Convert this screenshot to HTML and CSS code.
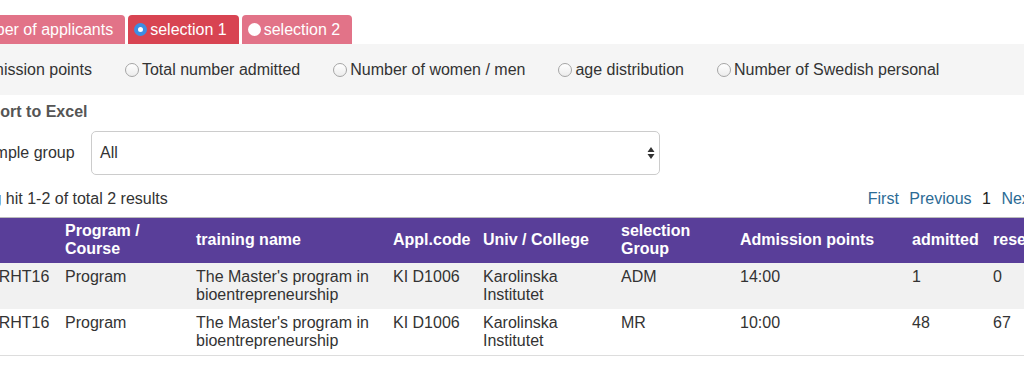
FILE: index.html
```html
<!DOCTYPE html>
<html lang="en">
<head>
  <meta charset="UTF-8">
  <title>Admission statistics</title>
  <link rel="stylesheet" href="styles.css">
</head>
<body>
  <div class="page">
    <div class="tabs">
      <div class="tab"><span class="dot"></span>Number of applicants</div>
      <div class="tab active"><span class="dot checked"></span>selection 1</div>
      <div class="tab"><span class="dot"></span>selection 2</div>
    </div>

    <div class="options">
      <label class="option"><span class="radio"></span>Admission points</label>
      <label class="option"><span class="radio"></span>Total number admitted</label>
      <label class="option"><span class="radio"></span>Number of women / men</label>
      <label class="option"><span class="radio"></span>age distribution</label>
      <label class="option"><span class="radio"></span>Number of Swedish personal</label>
    </div>

    <div class="filters">
      <div class="export">Export to Excel</div>
      <div class="field">
        <span class="field-label">Sample group</span>
        <div class="select">
          <span>All</span>
          <svg width="8" height="14" viewBox="0 0 8 14"><path d="M4 1 L7.5 6 H0.5 Z M4 13 L7.5 8 H0.5 Z" fill="#333"/></svg>
        </div>
      </div>
    </div>

    <div class="results">
      <span class="count">Showing hit 1-2 of total 2 results</span>
      <nav class="pager">
        <a>First</a>
        <a>Previous</a>
        <span class="current">1</span>
        <a>Next</a>
        <a>Last</a>
      </nav>
    </div>

    <table class="grid">
      <colgroup>
        <col class="c1"><col class="c2"><col class="c3"><col class="c4"><col class="c5">
        <col class="c6"><col class="c7"><col class="c8"><col class="c9">
      </colgroup>
      <thead>
        <tr>
          <th>Code</th>
          <th>Program / Course</th>
          <th>training name</th>
          <th>Appl.code</th>
          <th>Univ / College</th>
          <th>selection Group</th>
          <th>Admission points</th>
          <th>admitted</th>
          <th>reserves</th>
        </tr>
      </thead>
      <tbody>
        <tr>
          <td class="code">KIMEDRHT16</td>
          <td>Program</td>
          <td>The Master's program in bioentrepreneurship</td>
          <td>KI D1006</td>
          <td>Karolinska Institutet</td>
          <td>ADM</td>
          <td>14:00</td>
          <td>1</td>
          <td>0</td>
        </tr>
        <tr>
          <td class="code">KIMEDRHT16</td>
          <td>Program</td>
          <td>The Master's program in bioentrepreneurship</td>
          <td>KI D1006</td>
          <td>Karolinska Institutet</td>
          <td>MR</td>
          <td>10:00</td>
          <td>48</td>
          <td>67</td>
        </tr>
      </tbody>
    </table>
  </div>
</body>
</html>
```

FILE: styles.css
```css
body {
  margin: 0;
  font-family: "Liberation Sans", Arial, sans-serif;
  font-size: 16px;
  color: #333;
  background: #fff;
  overflow: hidden;
}
.page {
  width: 1140px;
  margin-left: -60px;
}
.tabs {
  display: flex;
  gap: 3px;
  margin-top: 15px;
}
.tab {
  display: flex;
  align-items: center;
  height: 29px;
  padding: 0 12px 0 6px;
  background-color: #e27388;
  color: #fff;
  border-radius: 4px 4px 0 0;
}
.tab.active {
  background-color: #d84452;
}
.dot {
  width: 13px;
  height: 13px;
  border-radius: 50%;
  background: #fff;
  margin-right: 3px;
  box-sizing: border-box;
}
.dot.checked {
  background: #fff;
  border: 4px solid #3c8ee3;
}
.options {
  display: flex;
  align-items: center;
  height: 51px;
  padding-left: 14px;
  background-color: #f5f5f5;
}
.option {
  display: flex;
  align-items: center;
  margin-right: 33px;
}
.radio {
  width: 14px;
  height: 14px;
  border: 1px solid #a5a5a5;
  border-radius: 50%;
  background: linear-gradient(#fff, #ececec);
  margin-right: 3px;
  box-sizing: border-box;
}
.filters {
  padding-left: 31px;
}
.export {
  font-weight: bold;
  color: #555;
  margin-top: 7px;
  height: 20px;
  line-height: 20px;
}
.field {
  display: flex;
  align-items: center;
  margin-top: 9px;
}
.field-label {
  width: 116px;
  padding-left: 4px;
}
.select {
  display: flex;
  align-items: center;
  justify-content: space-between;
  width: 569px;
  height: 44px;
  box-sizing: border-box;
  padding: 0 4px 0 8px;
  border: 1px solid #ccc;
  border-radius: 5px;
  background: #fff;
}
.results {
  display: flex;
  justify-content: space-between;
  align-items: center;
  margin-top: 14px;
  height: 20px;
  padding-right: 5px;
}
.pager a {
  color: #2c6b95;
  margin-left: 6px;
}
.pager .current {
  margin-left: 6px;
  color: #222;
}
.grid {
  width: 1140px;
  margin-top: 8px;
  border-collapse: collapse;
  table-layout: fixed;
  border-top: 1px solid #bbb;
  border-bottom: 1px solid #ddd;
}
.c1 { width: 117px; }
.c2 { width: 131px; }
.c3 { width: 197px; }
.c4 { width: 90px; }
.c5 { width: 138px; }
.c6 { width: 119px; }
.c7 { width: 172px; }
.c8 { width: 81px; }
.c9 { width: 95px; }
.grid th {
  background-color: #593e99;
  color: #fff;
  text-align: left;
  height: 45px;
  padding: 0 8px;
  line-height: 18px;
  vertical-align: middle;
  box-sizing: border-box;
}
.grid td {
  padding: 5px 8px;
  line-height: 18px;
  height: 46px;
  vertical-align: top;
  box-sizing: border-box;
}
.grid td.code {
  white-space: nowrap;
}
.grid tbody tr:nth-child(odd) {
  background-color: #f1f1f1;
}
```
